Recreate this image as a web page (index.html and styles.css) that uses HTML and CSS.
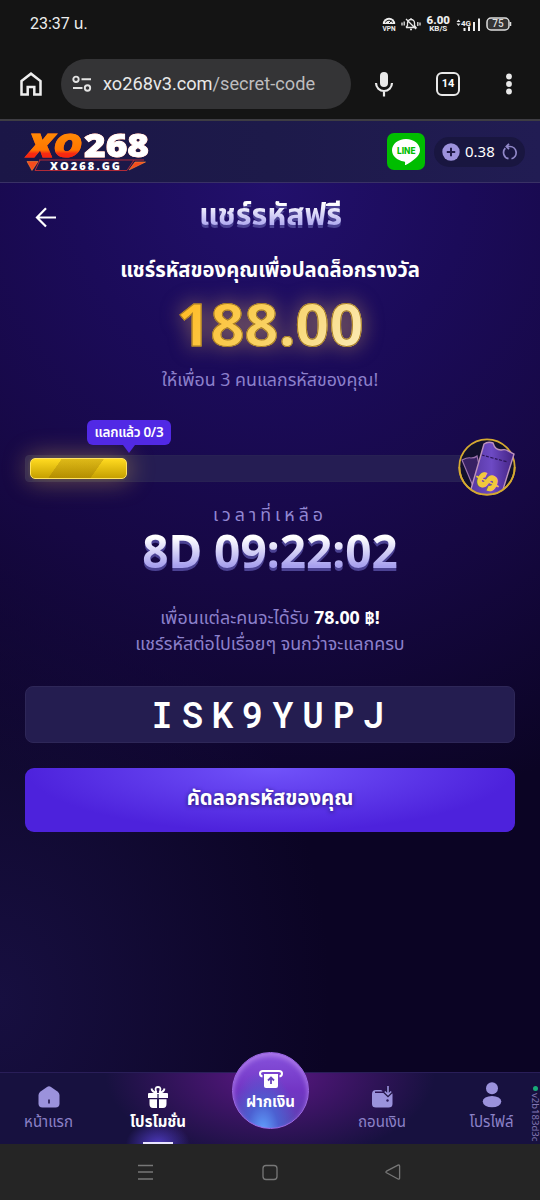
FILE: index.html
```html
<!DOCTYPE html>
<html lang="th">
<head>
<meta charset="utf-8">
<meta name="viewport" content="width=device-width, initial-scale=1">
<title>แชร์รหัสฟรี</title>
<link rel="stylesheet" href="styles.css">
</head>
<body>
<div class="statusbar">
  <span class="clock">23:37 น.</span>
  <div class="status-icons">
    <svg class="vpn" width="14" height="15" viewBox="0 0 14 15"><path d="M.8 7A6.2 6.2 0 0 1 13.200 7Z" fill="#eee"/><path d="M3 5.500Q7 .8 11 5.500M7 6l2.500-2.500" stroke="#141414" stroke-width="1" fill="none"/><text x="0.500" y="14" textLength="13" lengthAdjust="spacingAndGlyphs">VPN</text></svg>
    <svg width="20" height="14" viewBox="0 0 20 14" fill="none" stroke="#e8e8e8" stroke-width="1.300"><path d="M5 10.500h10L13.500 8.500V6a3.500 3.500 0 0 0-7 0v2.500L5 10.500M9 12.500h2M10 1v1.500M5 2l10 10M1 5.500v3M3.200 4.500v4M16.800 5v4M19 5.500v3"/></svg>
    <div class="speed"><b>6.00</b><span>KB/S</span></div>
    <svg class="signal" width="25" height="15" viewBox="0 0 25 15"><path d="M.5 5 2.500 2.500 4.500 5ZM.5 6.500h4L2.500 9Z" fill="#e8e8e8"/><text x="5" y="8.500" textLength="10">4G</text><path d="M8.500 11v3M13 9.500V14M18 5v9M23 1.500V14" stroke="#eee" stroke-width="2"/></svg>
    <svg class="battery" width="26" height="14" viewBox="0 0 26 14"><rect x="1" y="1" width="22" height="12" rx="4" fill="#333" stroke="#ddd" stroke-width="1.500"/><path d="M24.500 5v4" stroke="#ddd" stroke-width="1.500"/><text x="12" y="10.400" text-anchor="middle">75</text></svg>
  </div>
</div>
<div class="toolbar">
  <svg class="home" width="22" height="24" viewBox="0 0 22 24" fill="none" stroke="#eee" stroke-width="2.500"><path d="M1.500 9 11 1.700 20.500 9v13.500h-6.200V15H7.700v7.500H1.500Z"/></svg>
  <div class="address">
    <svg width="20" height="18" viewBox="0 0 20 18" fill="none" stroke="#e3e3e3" stroke-width="1.900"><circle cx="4" cy="4.300" r="2.700"/><path d="M9.500 4.300H19M1 13h9.500"/><circle cx="15.500" cy="13" r="2.700"/></svg>
    <span>xo268v3.com<i>/secret-code</i></span>
  </div>
  <svg class="mic" width="20" height="26" viewBox="0 0 20 26"><rect x="6" y="1" width="8" height="15" rx="4" fill="#e9e9e9"/><path d="M2 12a8 8 0 0 0 16 0M10 20v5.500" fill="none" stroke="#e9e9e9" stroke-width="2.200"/></svg>
  <div class="tabs">14</div>
  <svg class="more" width="6" height="22" viewBox="0 0 6 22" fill="#e9e9e9"><circle cx="3" cy="3.500" r="2.900"/><circle cx="3" cy="11" r="2.900"/><circle cx="3" cy="18.500" r="2.900"/></svg>
</div>
<header class="site-header">
  <svg class="logo" width="126" height="42" viewBox="0 0 126 42">
    <defs><linearGradient id="fire" x1="0" y1="0" x2="0" y2="1"><stop offset="0" stop-color="#ff9708"/><stop offset=".62" stop-color="#ff7600"/><stop offset=".7" stop-color="#f72b13"/><stop offset="1" stop-color="#ff1000"/></linearGradient></defs>
    <text class="logo-big logo-xo" x="3" y="26" textLength="54" lengthAdjust="spacingAndGlyphs">XO</text>
    <text class="logo-big" x="59" y="26" textLength="65" lengthAdjust="spacingAndGlyphs">268</text>
    <path d="M14 29h105M15 29 10 39.500h92L109 29" fill="none" stroke="#b02a38" stroke-width="1"/>
    <path d="M2 30.500h11L7 39.500ZM104 39 110 31h10.500Z" fill="#f54b1d" stroke="#ff8a35" stroke-width=".6"/>
    <text class="logo-small" x="25" y="38.500" textLength="70">XO268.GG</text>
  </svg>
  <svg class="line-app" width="38" height="37" viewBox="0 0 38 37"><rect width="38" height="37" rx="7" fill="#00bd00"/><path d="M19 6C11 6 5 11 5 17.300c0 5.600 5 10.200 12 11.200 1.300.3 1.200 1 1 2.900-.1.900.4.800 1.200.4C25 28.500 33 23.500 33 17.300 33 11 27 6 19 6Z" fill="#fff"/><text x="10" y="20.500" textLength="18.500" lengthAdjust="spacingAndGlyphs">LINE</text></svg>
  <div class="balance">
    <svg width="18" height="18" viewBox="0 0 18 18"><circle cx="9" cy="9" r="8.700" fill="#9d92dc"/><path d="M9 4.800v8.400M4.800 9h8.400" stroke="#211b4a" stroke-width="2"/></svg>
    <span>0.38</span>
    <svg width="16" height="18" viewBox="0 0 16 18" fill="none" stroke="#9188c9" stroke-width="1.700"><path d="M5.500 3.500H8a6.200 6.200 0 0 1 1.500 12.200M7 .8 4.300 3.500 7 6.200M3.300 5.200A6.300 6.300 0 0 0 6.500 15.700"/></svg>
  </div>
</header>
<main class="page">
  <div class="title-row">
    <svg width="22" height="20" viewBox="0 0 22 20" fill="none" stroke="#fff" stroke-width="2.200"><path d="M21 10.500H2.500M11 1.200 2 10.500l9 9"/></svg>
    <h1 class="title">แชร์รหัสฟรี</h1>
  </div>
  <h2 class="lead">แชร์รหัสของคุณเพื่อปลดล็อกรางวัล</h2>
  <div class="amount"><span>188.00</span></div>
  <p class="hint">ให้เพื่อน 3 คนแลกรหัสของคุณ!</p>
  <div class="progress">
    <div class="track"><div class="fill"></div></div>
    <div class="bubble"><span>แลกแล้ว 0/3</span></div>
    <svg class="ticket" width="62" height="60" viewBox="0 0 62 60">
      <defs><linearGradient id="tk" x1="0" x2="1"><stop offset="0" stop-color="#55359f"/><stop offset=".5" stop-color="#6d4ac4"/><stop offset="1" stop-color="#432282"/></linearGradient><clipPath id="ring"><path d="M0 0H62V30H58A28 28 0 0 1 2 30H0Z"/></clipPath></defs>
      <circle cx="30" cy="30" r="27.700" fill="#12102d"/>
      <circle cx="30" cy="30" r="27.700" fill="none" stroke="#d5aa31" stroke-width="1.800"/>
      <g clip-path="url(#ring)"><path d="M5 23q6-3 9-2 4 0 6-2l7 30-9 5Z" fill="#382164" stroke="#9b73ad" stroke-width="1.200"/><path d="M27 7q4-3 9-1 2 7 8 7 5-1 7 1l6 3-13 42H12Z" fill="url(#tk)" stroke="#bc91bb" stroke-width="1.400"/><path d="M25 18q10 3 26 7" fill="none" stroke="#2b1559" stroke-width="1.200" stroke-dasharray="3 1.500"/><text class="dollar" transform="translate(23 48) rotate(-65)" x="-3" y="15">$</text></g>
      <path d="M2.300 30a27.700 27.700 0 0 0 55.400 0" fill="none" stroke="#d5aa31" stroke-width="1.800"/>
    </svg>
  </div>
  <p class="remain">เวลาที่เหลือ</p>
  <div class="timer"><span>8D 09:22:02</span></div>
  <p class="note note-first"><span>เพื่อนแต่ละคนจะได้รับ <b>78.00 ฿!</b></span></p>
  <p class="note"><span>แชร์รหัสต่อไปเรื่อยๆ จนกว่าจะแลกครบ</span></p>
  <div class="code">ISK9YUPJ</div>
  <button class="copy">คัดลอกรหัสของคุณ</button>
</main>
<nav class="bottom">
  <a class="item"><svg width="22" height="22" viewBox="0 0 22 22"><path d="M9 1Q11-.3 13 1l6.500 4.500Q21.500 7 21.500 9v8.500q0 4-4 4h-13q-4 0-4-4V9Q.5 7 2.500 5.500Z" fill="#9b92dc"/><path d="M11 13.500v4" stroke="#25194e" stroke-width="1.700"/></svg><span>หน้าแรก</span></a>
  <a class="item active"><svg width="22" height="22" viewBox="0 0 22 22" fill="#fff"><path d="M2 7h18q1 0 1 1v4H1V8q0-1 1-1ZM2.500 13.200H10V22H6q-3.500 0-3.500-4ZM12 13.200h7.500V18q0 4-3.500 4h-4Z"/><path d="M10 7Q5 6 4.500 2.500M12 7q5-1 5.500-4.500M9.500 6.500Q7 1 11 1t1.500 5.500" fill="none" stroke="#fff" stroke-width="1.800"/><path d="M11 8v14" stroke="#282057" stroke-width="1.300"/></svg><span>โปรโมชั่น</span></a>
  <a class="deposit"><svg width="24" height="20" viewBox="0 0 24 20"><path d="M3.500 7.500Q1 7 1 4.500 1 2 4 2h16q3 0 3 2.500 0 2.500-2.500 3" fill="none" stroke="#fff" stroke-width="2"/><path d="M5 5h14v12q0 2-2 2H7q-2 0-2-2Z" fill="#fff"/><path d="M12 15V9M9 11.500l3-3 3 3" fill="none" stroke="#6844bc" stroke-width="1.800"/></svg><span>ฝากเงิน</span></a>
  <a class="item withdraw"><svg width="22" height="22" viewBox="0 0 22 22"><path d="M1 8Q1 4 5 4h4.500q2 0 2 1.500H4v1.500h16.500q1 0 1 1V18q0 3.500-4 3.500H5q-4 0-4-3.500Z" fill="#9b92dc"/><path d="M17 1v7M13.800 5.500 17 8.700l3.200-3.200" fill="none" stroke="#211544" stroke-width="4"/><path d="M17 0v8M13.800 5.500 17 8.700l3.200-3.200" fill="none" stroke="#9b92dc" stroke-width="1.600"/><circle cx="16.500" cy="14.500" r="1.200" fill="#2c1a5b"/></svg><span>ถอนเงิน</span></a>
  <a class="item profile"><svg width="20" height="26" viewBox="0 0 20 26" fill="#9b92dc"><circle cx="10" cy="6.200" r="6"/><ellipse cx="10" cy="19.600" rx="9.300" ry="5.700"/></svg><span>โปรไฟล์</span></a>
  <div class="version"><i></i>v2b183d3c</div>
</nav>
<div class="system-nav">
  <svg width="270" height="20" viewBox="0 0 270 20" fill="none" stroke="#777" stroke-width="1.300"><path d="M3 3.500h15M3 10h15M3 17h15"/><rect x="128" y="3.500" width="14" height="14" rx="3"/><path d="M251.500 9.200 263 3.200q1.600-.7 1.600 1V16q0 1.600-1.600 1l-11.500-6.200q-1.300-.8 0-1.600Z"/></svg>
</div>
</body>
</html>
```
FILE: styles.css
```css
* { box-sizing: border-box; }
body {
  margin: 0; width: 540px; height: 1200px; overflow: hidden;
  display: flex; flex-direction: column;
  background: #0d0529; color: #fff;
  font-family: "Noto Sans", "Noto Sans Thai", sans-serif;
}
h1, h2, p { margin: 0; font-weight: 400; }
svg { display: block; flex: none; overflow: visible; }
.statusbar { height: 48px; background: #141414; display: flex; align-items: center; justify-content: space-between; padding: 0 28px 0 30px; }
.clock { font: 400 16px Roboto, "Noto Sans Thai", sans-serif; color: #eee; }
.status-icons { display: flex; align-items: center; gap: 5.500px; }
.vpn text { font: 700 7px Roboto, sans-serif; fill: #eee; }
.speed { display: flex; flex-direction: column; align-items: center; font: 700 8px/8px Roboto, sans-serif; color: #eee; }
.speed b { font-size: 11.500px; line-height: 10px; }
.signal text { font: 700 8px Roboto, sans-serif; fill: #eee; }
.battery text { font: 500 10px Roboto, sans-serif; fill: #ddd; }
.toolbar { height: 73px; background: #141414; border-bottom: 2px solid #3e3d43; display: flex; align-items: center; padding: 0 28px 0 20px; }
.address { width: 290px; height: 50px; margin-left: 19px; border-radius: 25px; background: #343436; display: flex; align-items: center; gap: 11px; padding-left: 11px; font: 400 18.200px Roboto, sans-serif; color: #e9e9e9; }
.address i { font-style: normal; color: #bdbdbf; }
.mic { margin-left: 23px; }
.tabs { margin-left: 42px; width: 24px; height: 24px; border: 2.500px solid #e9e9e9; border-radius: 6px; font: 700 11px/20px Roboto, sans-serif; text-align: center; }
.more { margin-left: auto; }
.site-header { height: 62px; background: linear-gradient(90deg, #1b1647, #1d1a4a 50%, #211c53); border-bottom: 1px solid #393165; display: flex; align-items: center; padding: 0 15px 0 25px; }
.logo-big { font: 800 32.500px "Open Sans", sans-serif; fill: #fff; stroke: #fff; stroke-width: .8; filter: drop-shadow(0 0 .7px #e0421c); }
.logo-xo { font-style: italic; fill: url(#fire); stroke: url(#fire); stroke-width: 1.200; }
.logo-small { font: 800 11px "Open Sans", sans-serif; fill: #fff; }
.line-app { margin-left: auto; }
.line-app text { font: 800 8.500px Inter, sans-serif; fill: #00bd00; }
.balance { margin-left: 9px; width: 91px; height: 30px; border-radius: 15px; background: #191640; display: flex; align-items: center; gap: 5px; padding-left: 8px; font-size: 15px; }
.balance span { width: 32px; line-height: 20px; margin-top: -2px; }
.page { flex: 1; min-height: 0; padding: 0 25px; display: flex; flex-direction: column; align-items: stretch; text-align: center;
  background: radial-gradient(ellipse 560px 560px at 50% 0, #22106c 0, #1b0b59 35%, #160843 72%, transparent 115%), radial-gradient(ellipse 330px 450px at 0 92%, #170f40, transparent), #0b0424; }
.title-row { height: 68px; display: flex; align-items: center; padding-left: 10px; }
.title { flex: 1; margin: -6px 31px 0 0; font-size: 30.400px; line-height: 52px; font-weight: 700; }
.title, .timer span { background: linear-gradient(#fff 30%, #a7a0ee 76%); -webkit-background-clip: text; background-clip: text; color: transparent; filter: drop-shadow(0 3px 0 #4b4293); }
.lead { height: 38px; font-size: 20.300px; line-height: 36px; font-weight: 700; white-space: nowrap; }
.amount { height: 70px; font-size: 59.500px; line-height: 68px; font-weight: 700; }
.amount span { background: linear-gradient(120deg, #ffbd29 10%, #f8d263 50%, #fbe7aa 90%); -webkit-background-clip: text; background-clip: text; color: transparent; -webkit-text-stroke: 1px #a67b22; filter: drop-shadow(0 0 10px rgba(244, 190, 100, .5)); }
.hint { height: 40px; line-height: 41px; font-size: 17.800px; color: #8c80cb; }
.progress { position: relative; height: 98px; padding-top: 56px; }
.track { height: 27px; margin-right: 28px; border-radius: 4px; padding: 2px 4px; border: 1px solid #282153; background: #251d53; }
.fill { width: 97px; height: 21px; border-radius: 5px; border: 1px solid #ffe260; background: linear-gradient(125deg, transparent 28%, rgba(124, 87, 0, .25) 28.500% 67%, transparent 67.500%), linear-gradient(#ffda20, #c6a000); box-shadow: 0 0 24px 3px rgba(255, 202, 84, .35), 0 0 0 2px #2a2450; }
.bubble { position: absolute; left: 62px; top: 21px; width: 84px; height: 25px; border-radius: 6px; background: #5129e5; font-size: 13.500px; line-height: 24px; font-weight: 600; letter-spacing: -.3px; white-space: nowrap; }
.bubble::after { content: ""; position: absolute; left: 36px; top: 25px; border: 6px solid transparent; border-top: 8px solid #5129e5; border-bottom: 0; }
.ticket { position: absolute; right: -4px; top: 38px; }
.dollar { font: 900 27px Inter, sans-serif; fill: #f1c83c; }
.remain { height: 34px; line-height: 34px; font-size: 17.800px; letter-spacing: 4px; color: #9287d3; }
.timer { height: 49px; font-size: 46px; line-height: 39px; font-weight: 700; white-space: nowrap; }
.note { height: 26px; line-height: 24px; font-size: 17.850px; color: #8c80cb; white-space: nowrap; }
.note-first { margin-top: 25px; }
.note b { color: #fff; }
.code { height: 57px; margin-top: 29px; border: 1px solid #2e2758; border-radius: 8px; background: #241d50; font: 600 36px/54px "Roboto Mono", "DejaVu Sans Mono", monospace; letter-spacing: 8.600px; padding-left: 4px; }
.copy { height: 64px; margin-top: 25px; border: 0; border-radius: 9px; color: #fff; font: 700 20.400px "Noto Sans", "Noto Sans Thai", sans-serif; padding: 0 0 3px; background: radial-gradient(ellipse 245px 64px at 50% 0, #7153fa, #4d22dc); text-shadow: 0 1px 4px #241567; }
.bottom { position: relative; height: 72px; display: flex; border-top: 1px solid #291e58; background: radial-gradient(ellipse 165px 90px at 50% 0, #5b1784, transparent), #17113f; }
.item { width: 97px; height: 71px; display: flex; flex-direction: column; align-items: center; justify-content: flex-end; gap: 2px; padding-bottom: 11px; color: #8c82c8; font-size: 15px; line-height: 23px; white-space: nowrap; }
.active { width: 122px; color: #fff; font-weight: 700; background: linear-gradient(#e9e5ff, #e9e5ff) 50% 100% / 30px 2px no-repeat, radial-gradient(ellipse 32px 23px at 50% 100%, #4d39bd, transparent); }
.deposit { position: relative; width: 77px; height: 77px; margin: -21px 0 0 13px; border-radius: 50%; border: 1px solid #a06be7; display: flex; flex-direction: column; align-items: center; padding-top: 16px; gap: 1px; background: radial-gradient(ellipse at 40% 105%, #61a5ff 0, #4c60d1 25%, transparent 55%), linear-gradient(#8752dc, #7235c4 50%, #5942ad); font-size: 15px; line-height: 23px; font-weight: 700; white-space: nowrap; box-shadow: inset 0 3px 5px #ad7ae9; }
.withdraw { width: 122px; margin-left: 12px; }
.profile { width: 97px; }
.version { position: absolute; right: -2px; top: 13px; writing-mode: vertical-rl; font-size: 9.500px; line-height: 13px; color: #8176b2; display: flex; align-items: center; gap: 2px; }
.version i { width: 5px; height: 5px; border-radius: 50%; background: #19ac79; }
.system-nav { height: 56px; background: #252525; display: flex; align-items: center; justify-content: center; }
```
